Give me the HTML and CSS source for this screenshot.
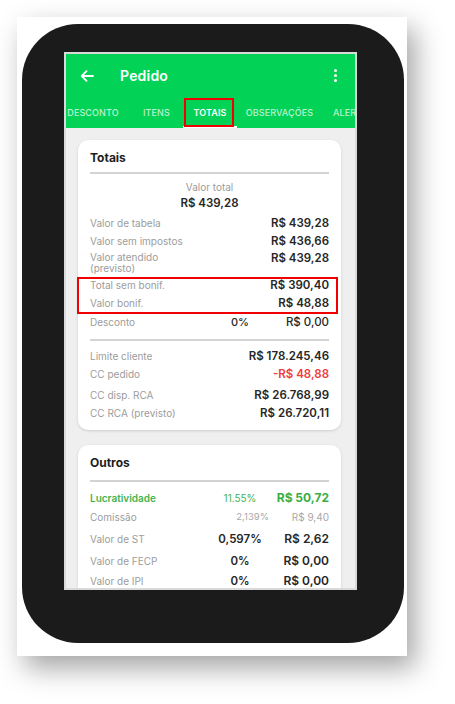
FILE: index.html
```html
<!DOCTYPE html>
<html lang="pt-BR">
<head>
<meta charset="utf-8">
<title>Pedido</title>
<link rel="stylesheet" href="styles.css">
</head>
<body>
<div class="frame">
  <div class="phone">
    <div class="screen">
      <header class="appbar">
        <div class="titlebar">
          <svg class="back" width="14" height="12" viewBox="0 0 14 12"><path d="M13 6H2M6.5 1.2L1.7 6l4.8 4.8" fill="none" stroke="#fff" stroke-width="1.8" stroke-linecap="round" stroke-linejoin="round"/></svg>
          <span class="title">Pedido</span>
          <span class="kebab"><i></i><i></i><i></i></span>
        </div>
        <nav class="tabs">
          <span class="tab t-desc">DESCONTO</span>
          <span class="tab t-itens">ITENS</span>
          <span class="tab t-totais active"><span class="hl">TOTAIS</span></span>
          <span class="tab t-obs">OBSERVAÇÕES</span>
          <span class="tab t-aler">ALERTAS</span>
        </nav>
      </header>
      <main class="content">
        <section class="card card-totais">
          <h2 class="card-title">Totais</h2>
          <div class="divider d1"></div>
          <div class="center-label">Valor total</div>
          <div class="center-value">R$ 439,28</div>
          <div class="row r-tabela"><span class="lbl">Valor de tabela</span><span class="val wide">R$ 439,28</span></div>
          <div class="row"><span class="lbl">Valor sem impostos</span><span class="val wide">R$ 436,66</span></div>
          <div class="row two"><span class="lbl">Valor atendido<br>(previsto)</span><span class="val wide">R$ 439,28</span></div>
          <div class="marked">
            <div class="row"><span class="lbl">Total sem bonif.</span><span class="val wide">R$ 390,40</span></div>
            <div class="row"><span class="lbl">Valor bonif.</span><span class="val wide">R$ 48,88</span></div>
          </div>
          <div class="row r-desc"><span class="lbl">Desconto</span><span class="pct">0%</span><span class="val">R$ 0,00</span></div>
          <div class="divider d2"></div>
          <div class="row r-lim"><span class="lbl">Limite cliente</span><span class="val wide">R$ 178.245,46</span></div>
          <div class="row"><span class="lbl">CC pedido</span><span class="val wide neg">-R$ 48,88</span></div>
          <div class="row r-ccd"><span class="lbl">CC disp. RCA</span><span class="val wide">R$ 26.768,99</span></div>
          <div class="row"><span class="lbl">CC RCA (previsto)</span><span class="val wide">R$ 26.720,11</span></div>
        </section>
        <section class="card card-outros">
          <h2 class="card-title">Outros</h2>
          <div class="divider d3"></div>
          <div class="row big r-lucro good"><span class="lbl">Lucratividade</span><span class="pct">11.55%</span><span class="val">R$ 50,72</span></div>
          <div class="row big r-com muted"><span class="lbl">Comissão</span><span class="pct">2,139%</span><span class="val">R$ 9,40</span></div>
          <div class="row big r-st"><span class="lbl">Valor de ST</span><span class="pct">0,597%</span><span class="val">R$ 2,62</span></div>
          <div class="row big r-fecp"><span class="lbl">Valor de FECP</span><span class="pct">0%</span><span class="val">R$ 0,00</span></div>
          <div class="row big r-ipi"><span class="lbl">Valor de IPI</span><span class="pct">0%</span><span class="val">R$ 0,00</span></div>
        </section>
      </main>
    </div>
  </div>
</div>
</body>
</html>
```

FILE: styles.css
```css
* { box-sizing: border-box; margin: 0; padding: 0; }
html, body { background: #fff; }
body {
  width: 455px;
  height: 704px;
  overflow: hidden;
  font-family: "Inter", "Noto Sans", sans-serif;
}
.frame {
  margin: 17px 0 0 17px;
  width: 390px;
  height: 639px;
  background: #fff;
  box-shadow: 8px 12px 26px rgba(0,0,0,0.36);
  padding: 7px 3px 13px 5px;
}
.phone {
  width: 382px;
  height: 619px;
  background: #1b1b1b;
  border-radius: 56px;
  padding: 28px 0 0 42px;
}
.screen {
  width: 293px;
  height: 538px;
  border: 2px solid #d9d9d9;
  background: #efefef;
  overflow: hidden;
}
.appbar {
  background: #02d356;
  height: 74px;
  display: flex;
  flex-direction: column;
}
.titlebar {
  height: 43px;
  display: flex;
  align-items: center;
  padding-left: 14px;
  color: #fff;
}
.back { display: block; margin-top: 1px; }
.title {
  margin-left: 26px;
  font-size: 14px;
  font-weight: 600;
  letter-spacing: 0.2px;
}
.kebab {
  margin-left: auto;
  margin-right: 18px;
  display: flex;
  flex-direction: column;
  gap: 2px;
}
.kebab i {
  display: block;
  width: 3px;
  height: 3px;
  border-radius: 50%;
  background: #fff;
}
.tabs {
  height: 31px;
  display: flex;
  margin-left: -10px;
  white-space: nowrap;
}
.tab {
  flex: none;
  display: flex;
  align-items: center;
  justify-content: center;
  font-size: 9px;
  font-weight: 500;
  color: rgba(255,255,255,0.72);
  letter-spacing: 0.1px;
  padding-bottom: 1px;
}
.t-desc { width: 74px; }
.t-itens { width: 53px; }
.t-totais { width: 54px; }
.t-obs { width: 85px; }
.t-aler { width: 80px; justify-content: flex-start; padding-left: 11px; }
.tab.active {
  color: #fff;
  font-weight: 600;
  border-bottom: 2px solid #fff;
  padding-top: 2px;
}
.hl { position: relative; }
.hl::after {
  content: "";
  position: absolute;
  left: -10px;
  right: -8px;
  top: -9px;
  bottom: -9px;
  border: 2px solid #f00000;
}
.content {
  padding: 12px 14px 0 12px;
}
.card {
  background: #fff;
  border-radius: 10px;
  box-shadow: 0 1px 3px rgba(0,0,0,0.14);
  padding: 10px 12px 8px 12px;
}
.card-outros { margin-top: 15px; }
.card-title {
  font-size: 12px;
  line-height: 16px;
  font-weight: 700;
  color: #1d1d1d;
}
.divider {
  height: 2px;
  background: #d3d3d3;
}
.d1 { margin-top: 6px; }
.d2 { margin-top: 8px; }
.d3 { margin-top: 9px; }
.center-label {
  margin-top: 5px;
  text-align: center;
  font-size: 10px;
  line-height: 16px;
  color: #9c9c9c;
}
.center-value {
  text-align: center;
  font-size: 11.5px;
  line-height: 16px;
  font-weight: 600;
  color: #262626;
}
.row {
  display: grid;
  grid-template-columns: 1fr 70px 54px;
  align-items: center;
  height: 18px;
}
.lbl {
  font-size: 10px;
  color: #9c9c9c;
  line-height: 16px;
  white-space: nowrap;
}
.val {
  justify-self: end;
  font-size: 11.5px;
  line-height: 16px;
  font-weight: 600;
  color: #262626;
  white-space: nowrap;
}
.val.wide { grid-column: 2 / 4; }
.pct {
  justify-self: center;
  font-size: 11px;
  font-weight: 600;
  color: #262626;
  line-height: 16px;
}
.neg { color: #f03c3c; }
.r-tabela { margin-top: 3px; }
.row.two {
  height: 26px;
  align-items: start;
}
.row.two .lbl { line-height: 11px; padding-top: 2px; }
.marked { position: relative; }
.marked::after {
  content: "";
  position: absolute;
  left: -13px;
  right: -9px;
  top: 1px;
  bottom: -2px;
  border: 2px solid #f00000;
}
.r-desc { margin-top: 1px; }
.r-desc .pct, .r-desc .val { font-weight: 500; }
.r-lim { margin-top: 6px; }
.r-ccd { margin-top: 3px; }
.r-lucro { margin-top: 7px; }
.row.big .val { font-size: 12px; }
.row.big .pct { font-size: 11.5px; }
.good .lbl { color: #45b44e; font-weight: 600; }
.row.good .pct { color: #45b44e; font-weight: 400; font-size: 10px; }
.good .val { color: #3aae44; font-weight: 700; }
.r-com { margin-top: 1px; }
.row.muted .pct { color: #a8a8a8; font-weight: 400; font-size: 9.5px; justify-self: end; padding-right: 6px; }
.row.muted .val { color: #a8a8a8; font-weight: 400; font-size: 10px; }
.r-st { margin-top: 4px; }
.r-fecp { margin-top: 4px; }
.r-ipi { margin-top: 2px; }
```
